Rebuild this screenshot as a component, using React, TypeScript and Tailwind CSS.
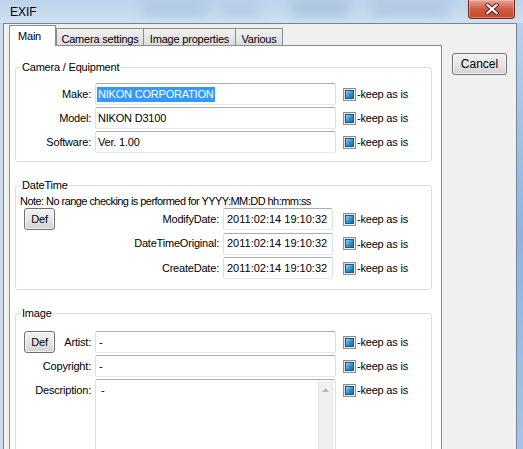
import React from "react";

function Tri() {
  return (
    <span className="flex h-[13px] w-[13px] shrink-0 items-center justify-center border border-[#8e8f8f] bg-gradient-to-br from-[#d8d8d8] to-[#f6f6f6]">
      <span className="h-[9px] w-[9px] border border-[#1d5b86] bg-gradient-to-br from-[#9ad6f4] via-[#3a95cf] to-[#1b679c]" />
    </span>
  );
}

function Keep({ top = false }: { top?: boolean }) {
  return (
    <div className={`flex items-center gap-[1px] ${top ? "mt-[4px]" : ""}`}>
      <Tri />
      <span className="leading-[14px]">-keep as is</span>
    </div>
  );
}

function Input({
  w,
  pl,
  children,
}: {
  w: string;
  pl: string;
  children: React.ReactNode;
}) {
  return (
    <div
      className={`flex h-[22px] items-center overflow-hidden whitespace-nowrap rounded-[2px] border border-[#abadb3] border-x-[#dbdfe6] border-b-[#e3e9ef] bg-white ${w} ${pl}`}
    >
      {children}
    </div>
  );
}

function WinButton({ children, cls }: { children: React.ReactNode; cls: string }) {
  return (
    <div
      className={`flex items-center justify-center rounded-[3px] border border-[#707070] bg-gradient-to-b from-[#f2f2f2] via-[#e6e6e6] to-[#d2d2d2] leading-[14px] shadow-[inset_0_0_0_1px_rgba(255,255,255,0.7)] ${cls}`}
    >
      {children}
    </div>
  );
}

function Legend({ children }: { children: React.ReactNode }) {
  return <legend className="ml-[5px] px-[1px] leading-[14px]">{children}</legend>;
}

export default function App() {
  return (
    <div className="flex h-[449px] w-[523px] flex-col overflow-hidden bg-gradient-to-b from-[#c6d9ed] to-[#b4cce6] font-['Liberation_Sans',Arial,sans-serif] text-[11px] tracking-[-0.2px] text-black">
      {/* Title bar */}
      <div className="relative flex h-[23px] shrink-0 items-start justify-between overflow-hidden bg-gradient-to-b from-[#bcd3ea] to-[#cfe0f1]">
        <div className="pointer-events-none absolute left-[140px] top-[2px] h-[14px] w-[70px] rounded-full bg-[#8fb0d4] opacity-40 blur-[6px]" />
        <div className="pointer-events-none absolute left-[220px] top-[4px] h-[12px] w-[40px] rounded-full bg-[#9fb8d6] opacity-40 blur-[6px]" />
        <div className="pointer-events-none absolute left-[290px] top-[2px] h-[14px] w-[60px] rounded-full bg-[#7fa3cc] opacity-40 blur-[6px]" />
        <div className="pointer-events-none absolute left-[370px] top-[2px] h-[14px] w-[80px] rounded-full bg-[#8eaed2] opacity-40 blur-[6px]" />
        <span className="relative pl-[10px] pt-[5px] text-[12px] leading-[14px] tracking-normal">EXIF</span>
        <div className="relative mr-[8px] flex h-[19px] w-[47px] items-center justify-center rounded-b-[4px] border border-t-0 border-[#6b2a22] bg-gradient-to-b from-[#e4a597] via-[#cf5a44] to-[#c44a2e] shadow-[inset_0_0_0_1px_rgba(255,200,190,0.45)]">
          <svg width="14" height="12" viewBox="0 0 14 12">
            <path d="M2.5 2 L11.5 10 M11.5 2 L2.5 10" stroke="#5a1a12" strokeWidth="4" strokeLinecap="square" />
            <path d="M2.5 2 L11.5 10 M11.5 2 L2.5 10" stroke="#ffffff" strokeWidth="2.2" strokeLinecap="square" />
          </svg>
        </div>
      </div>

      {/* Body */}
      <div className="flex min-h-0 flex-1">
        <div className="w-[3px] shrink-0 bg-[#c9d9ea]" />
        <div className="flex min-w-0 flex-1 items-start border-x border-t border-[#75879b] bg-[#f0f0f0] pl-[5px] pt-[1px]">
          {/* Tab control */}
          <div className="flex w-[433px] shrink-0 flex-col">
            <div className="flex h-[20px] items-end">
              <div className="relative z-10 -mb-px flex h-[21px] w-[47px] items-start border-x border-t border-[#898c95] bg-white pl-[8px] pt-[3px] leading-[14px]">
                Main
              </div>
              <div className="flex h-[17px] w-[88px] items-start justify-center border border-b-0 border-[#898c95] bg-gradient-to-b from-[#f2f2f2] to-[#dcdcdc] pt-[3px] leading-[14px]">
                Camera settings
              </div>
              <div className="-ml-px flex h-[17px] w-[93px] items-start justify-center border border-b-0 border-[#898c95] bg-gradient-to-b from-[#f2f2f2] to-[#dcdcdc] pt-[3px] leading-[14px]">
                Image properties
              </div>
              <div className="-ml-px flex h-[17px] w-[48px] items-start justify-center border border-b-0 border-[#898c95] bg-gradient-to-b from-[#f2f2f2] to-[#dcdcdc] pt-[3px] leading-[14px]">
                Various
              </div>
            </div>
            <div className="h-[460px] border border-[#898c95] bg-white pl-[5px] pr-[9px]">
              {/* Camera / Equipment */}
              <fieldset className="mt-[14px] rounded-[3px] border border-[#d5dfe5] pb-[8px] pt-[9px]">
                <Legend>Camera / Equipment</Legend>
                <div className="flex flex-col gap-[2px]">
                  {[
                    ["Make:", "NIKON CORPORATION", true],
                    ["Model:", "NIKON D3100", false],
                    ["Software:", "Ver. 1.00", false],
                  ].map(([label, value, sel]) => (
                    <div key={label as string} className="flex items-center">
                      <div className="w-[75px] text-right">{label}</div>
                      <div className="ml-[4px]">
                        <Input w="w-[241px]" pl="pl-[1px]">
                          {sel ? (
                            <span className="bg-[#3399ff] px-[1px] leading-[15px] text-white">{value}</span>
                          ) : (
                            <span className="pl-[1px]">{value}</span>
                          )}
                        </Input>
                      </div>
                      <div className="ml-[7px]">
                        <Keep />
                      </div>
                    </div>
                  ))}
                </div>
              </fieldset>

              {/* DateTime */}
              <fieldset className="mt-[16px] rounded-[3px] border border-[#d5dfe5] pb-[10px] pt-[3px]">
                <Legend>DateTime</Legend>
                <div className="pl-[4px] leading-[13px] tracking-[-0.55px]">Note: No range checking is performed for YYYY:MM:DD hh:mm:ss</div>
                <div className="flex flex-col gap-[2.5px]">
                  {["ModifyDate:", "DateTimeOriginal:", "CreateDate:"].map((label, i) => (
                    <div key={label} className="flex items-center">
                      <div className="flex w-[203px] items-center justify-between">
                        {i === 0 ? (
                          <WinButton cls="ml-[8px] h-[22px] w-[31px]">Def</WinButton>
                        ) : (
                          <span />
                        )}
                        <span>{label}</span>
                      </div>
                      <div className="ml-[4px]">
                        <Input w="w-[110px]" pl="pl-[3px]">
                          <span className="tracking-normal">2011:02:14 19:10:32</span>
                        </Input>
                      </div>
                      <div className="ml-[10px]">
                        <Keep />
                      </div>
                    </div>
                  ))}
                </div>
              </fieldset>

              {/* Image */}
              <fieldset className="mt-[16px] rounded-[3px] border border-[#d5dfe5] pt-[11px]">
                <Legend>Image</Legend>
                <div className="flex flex-col gap-[2px]">
                  <div className="flex items-center">
                    <div className="flex w-[75px] items-center justify-between">
                      <WinButton cls="ml-[8px] h-[22px] w-[31px]">Def</WinButton>
                      <span>Artist:</span>
                    </div>
                    <div className="ml-[4px]">
                      <Input w="w-[241px]" pl="pl-[3px]">-</Input>
                    </div>
                    <div className="ml-[7px]">
                      <Keep />
                    </div>
                  </div>
                  <div className="flex items-center">
                    <div className="w-[75px] text-right">Copyright:</div>
                    <div className="ml-[4px]">
                      <Input w="w-[241px]" pl="pl-[3px]">-</Input>
                    </div>
                    <div className="ml-[7px]">
                      <Keep />
                    </div>
                  </div>
                  <div className="flex items-start">
                    <div className="flex h-[22px] w-[75px] items-center justify-end">Description:</div>
                    <div className="ml-[4px] flex h-[90px] w-[241px] rounded-[2px] border border-[#abadb3] border-x-[#dbdfe6] border-b-[#e3e9ef] bg-white">
                      <div className="flex-1 pl-[5px] pt-[3px] leading-[14px]">-</div>
                      <div className="mr-[2px] mt-[1px] flex w-[15px] justify-center border-x border-[#e6e6e6] bg-[#f0f0f0] pt-[7px]">
                        <svg width="7" height="4" viewBox="0 0 7 4">
                          <path d="M0 4 L3.5 0 L7 4 Z" fill="#b5b5b5" />
                        </svg>
                      </div>
                    </div>
                    <div className="ml-[7px]">
                      <Keep top />
                    </div>
                  </div>
                </div>
              </fieldset>
            </div>
          </div>

          {/* Cancel */}
          <WinButton cls="ml-[10px] mt-[28px] h-[22px] w-[55px] text-[12px] tracking-normal">Cancel</WinButton>
        </div>
        <div className="w-[6px] shrink-0 bg-gradient-to-b from-[#b9d0ea] via-[#8fb2dc] to-[#a7c3e4]" />
      </div>
    </div>
  );
}
